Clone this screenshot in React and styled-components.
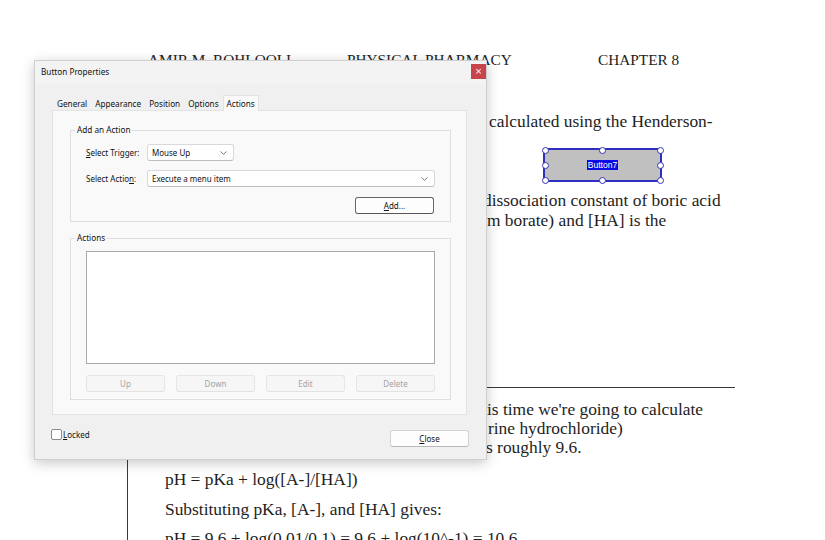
import React from "react";
import styled, { createGlobalStyle } from "styled-components";

const Global = createGlobalStyle`
  *, *::before, *::after { box-sizing: border-box; }
  html, body { margin: 0; padding: 0; background: #fff; }
  body { width: 825px; height: 540px; overflow: hidden; }
`;

const Page = styled.div`
  position: relative;
  width: 825px;
  height: 540px;
  overflow: hidden;
  background: #fff;
  font-family: "Liberation Serif", "Times New Roman", serif;
  color: #1e1e1e;
`;

const Doc = styled.div`
  padding: 50px 0 0 165px;
  font-size: 17.4px;
`;

const Header = styled.div`
  display: grid;
  grid-template-columns: 199px 251px auto;
  margin-left: -17px;
  font-size: 15.3px;
  line-height: 19px;
  height: 19px;
  white-space: nowrap;
`;

const Line = styled.div`
  display: flex;
  white-space: nowrap;
  line-height: ${(p) => p.$lh || 20}px;
  height: ${(p) => p.$lh || 20}px;
  margin-top: ${(p) => p.$mt || 0}px;
`;

const Lead = styled.span`
  display: inline-block;
  width: ${(p) => p.$w}px;
  overflow: hidden;
  flex: none;
`;

const FormField = styled.div`
  position: relative;
  width: 119px;
  height: 34px;
  margin: ${(p) => p.$mt}px 0 0 ${(p) => p.$ml}px;
  background: #c0c0c0;
  border: 2px solid #2e2ebf;
  display: flex;
  align-items: center;
  justify-content: center;
`;

const FieldCaption = styled.span`
  font-family: "Liberation Sans", Arial, sans-serif;
  font-size: 8.5px;
  line-height: 10px;
  color: #fff;
  background: #0a0ae6;
  padding: 0 1px;
`;

const Handle = styled.span`
  position: absolute;
  left: ${(p) => p.$x}%;
  top: ${(p) => p.$y}%;
  width: 7px;
  height: 7px;
  margin: -3.5px 0 0 -3.5px;
  border-radius: 50%;
  background: #fff;
  border: 1px solid #3434b8;
`;

const RuledBox = styled.div`
  margin: ${(p) => p.$mt}px 0 0 -38px;
  width: 608px;
  height: 200px;
  border-top: 1px solid #3a3a3a;
  border-left: 1px solid #3a3a3a;
  padding: 12px 0 0 37px;
`;

/* ---------- Dialog ---------- */

const Dialog = styled.div`
  position: absolute;
  left: 34px;
  top: 60px;
  width: 453px;
  height: 400px;
  background: #f0f0f0;
  border: 1px solid #cfcfcf;
  box-shadow: 0 3px 12px rgba(0, 0, 0, 0.22);
  font-family: "Noto Sans", "Open Sans", sans-serif;
  font-size: 8px;
  color: #111;
  display: flex;
  flex-direction: column;
`;

const TitleBar = styled.div`
  height: 23px;
  display: flex;
  justify-content: space-between;
  align-items: flex-start;
  background: #f3f3f3;
  padding-left: 6px;
`;

const Title = styled.span`
  line-height: 22px;
  font-size: 8.2px;
`;

const CloseX = styled.div`
  width: 15px;
  height: 15px;
  margin-top: 3px;
  background: #c8444b;
  color: #fff;
  font-family: "DejaVu Sans", sans-serif;
  font-size: 9px;
  line-height: 15px;
  text-align: center;
`;

const Body = styled.div`
  flex: 1;
  padding: 12px 19px 0 17px;
  display: flex;
  flex-direction: column;
`;

const Tabs = styled.div`
  display: flex;
  height: 14px;
  align-items: flex-end;
  padding-left: 1px;
`;

const Tab = styled.div`
  padding: 0 3px;
  height: ${(p) => (p.$active ? 16 : 14)}px;
  line-height: ${(p) => (p.$active ? 15 : 14)}px;
  font-size: 8.2px;
  background: ${(p) => (p.$active ? "#f9f9f9" : "transparent")};
  border: 1px solid ${(p) => (p.$active ? "#e2e2e2" : "transparent")};
  border-bottom: none;
  margin-bottom: ${(p) => (p.$active ? -1 : 0)}px;
  position: relative;
  white-space: nowrap;
`;

const TabPanel = styled.div`
  height: 305px;
  background: #f9f9f9;
  border: 1px solid #e3e3e3;
  padding: 19px 15px 0 17px;
`;

const Group = styled.div`
  position: relative;
  height: ${(p) => p.$h}px;
  margin-top: ${(p) => p.$mt || 0}px;
  border: 1px solid #dedede;
  padding: ${(p) => p.$pt}px 15px 0 15px;
`;

const Legend = styled.span`
  position: absolute;
  top: -7px;
  left: 4px;
  padding: 0 2px;
  background: #f9f9f9;
  line-height: 12px;
  font-size: 8.2px;
`;

const FieldRow = styled.div`
  display: flex;
  align-items: center;
  margin-top: ${(p) => p.$mt || 0}px;
`;

const FieldLabel = styled.span`
  width: 61px;
  flex: none;
`;

const Select = styled.div`
  width: ${(p) => p.$w}px;
  height: 17px;
  background: #fff;
  border: 1px solid #d9d9d9;
  border-bottom-color: #bdbdbd;
  border-radius: 3px;
  padding: 0 6px 0 4px;
  display: flex;
  align-items: center;
  justify-content: space-between;
`;

const ButtonRight = styled.div`
  display: flex;
  justify-content: flex-end;
  margin-top: 10px;
  padding-right: 1px;
`;

const PushButton = styled.div`
  width: 79px;
  height: 17px;
  margin-top: ${(p) => p.$mt || 0}px;
  border-radius: 3px;
  display: flex;
  align-items: center;
  justify-content: center;
  background: ${(p) => (p.$disabled ? "#f6f6f6" : "#fdfdfd")};
  color: ${(p) => (p.$disabled ? "#a3a3a3" : "#111")};
  border: 1px solid
    ${(p) => (p.$focus ? "#666" : p.$disabled ? "#e6e6e6" : "#d3d3d3")};
  border-bottom-color: ${(p) =>
    p.$focus ? "#555" : p.$disabled ? "#e2e2e2" : "#b9b9b9"};
  box-shadow: ${(p) => (p.$focus ? "inset 0 0 0 1px #fff" : "none")};
`;

const ListBox = styled.div`
  width: 349px;
  height: 113px;
  background: #fff;
  border: 1px solid #a9a9a9;
`;

const ButtonRow = styled.div`
  display: flex;
  justify-content: space-between;
  width: 349px;
  margin-top: 11px;
`;

const Footer = styled.div`
  display: flex;
  justify-content: space-between;
  align-items: flex-start;
  padding-top: 14px;
  margin: 0 -2px 0 -1px;
`;

const CheckLabel = styled.label`
  display: flex;
  align-items: center;
  gap: 1px;
  line-height: 11px;
`;

const CheckBox = styled.span`
  width: 11px;
  height: 11px;
  border: 1px solid #8a8a8a;
  border-radius: 2px;
  background: #fff;
`;

const Chevron = () => (
  <svg width="7" height="4" viewBox="0 0 7 4">
    <path d="M0.5 0.5 L3.5 3.3 L6.5 0.5" fill="none" stroke="#6a6a6a" strokeWidth="0.9" />
  </svg>
);

const handles = [
  [0, 0], [50, 0], [100, 0],
  [0, 50], [100, 50],
  [0, 100], [50, 100], [100, 100],
];

const tabs = ["General", "Appearance", "Position", "Options", "Actions"];

export default function App() {
  return (
    <Page>
      <Global />
      <Doc>
        <Header>
          <span>AMIR M. ROHLOOLI</span>
          <span>PHYSICAL PHARMACY</span>
          <span>CHAPTER 8</span>
        </Header>
        <Line $mt={42}>
          <Lead $w={324}>The pH of this buffer solution can be </Lead>
          calculated using the Henderson-
        </Line>
        <FormField $mt={17} $ml={378}>
          <FieldCaption>Button7</FieldCaption>
          {handles.map(([x, y]) => (
            <Handle key={`${x}-${y}`} $x={x} $y={y} />
          ))}
        </FormField>
        <Line $mt={8}>
          <Lead $w={318}>Hasselbalch equation, where pKa is the </Lead>
          dissociation constant of boric acid
        </Line>
        <Line>
          <Lead $w={322}>(5.0), [A-] is the concentration of sodiu</Lead>
          m borate) and [HA] is the
        </Line>
        <RuledBox $mt={157}>
          <Line $lh={19}>
            <Lead $w={322}>Let's try another example. Th</Lead>
            is time we're going to calculate
          </Line>
          <Line $lh={19}>
            <Lead $w={323}>the pH of 0.01 M ephedrine (as ephed</Lead>
            rine hydrochloride)
          </Line>
          <Line $lh={19}>
            <Lead $w={321}>in 0.1 M solution. The pKa of ephedrine i</Lead>
            s roughly 9.6.
          </Line>
          <Line $mt={12}>pH = pKa + log([A-]/[HA])</Line>
          <Line $mt={10}>Substituting pKa, [A-], and [HA] gives:</Line>
          <Line $mt={9}>pH = 9.6 + log(0.01/0.1) = 9.6 + log(10^-1) = 10.6</Line>
        </RuledBox>
      </Doc>

      <Dialog>
        <TitleBar>
          <Title>Button Properties</Title>
          <CloseX>×</CloseX>
        </TitleBar>
        <Body>
          <Tabs>
            {tabs.map((t) => (
              <Tab key={t} $active={t === "Actions"}>
                {t}
              </Tab>
            ))}
          </Tabs>
          <TabPanel>
            <Group $h={92} $pt={13}>
              <Legend>Add an Action</Legend>
              <FieldRow>
                <FieldLabel>
                  <u>S</u>elect Trigger:
                </FieldLabel>
                <Select $w={87}>
                  Mouse Up
                  <Chevron />
                </Select>
              </FieldRow>
              <FieldRow $mt={9}>
                <FieldLabel>
                  Select Actio<u>n</u>:
                </FieldLabel>
                <Select $w={288}>
                  Execute a menu item
                  <Chevron />
                </Select>
              </FieldRow>
              <ButtonRight>
                <PushButton $focus>
                  <span>
                    <u>A</u>dd...
                  </span>
                </PushButton>
              </ButtonRight>
            </Group>
            <Group $h={162} $pt={12} $mt={16}>
              <Legend>Actions</Legend>
              <ListBox />
              <ButtonRow>
                <PushButton $disabled>Up</PushButton>
                <PushButton $disabled>Down</PushButton>
                <PushButton $disabled>Edit</PushButton>
                <PushButton $disabled>Delete</PushButton>
              </ButtonRow>
            </Group>
          </TabPanel>
          <Footer>
            <CheckLabel>
              <CheckBox />
              <span>
                <u>L</u>ocked
              </span>
            </CheckLabel>
            <PushButton $mt={1}>
              <span>
                <u>C</u>lose
              </span>
            </PushButton>
          </Footer>
        </Body>
      </Dialog>
    </Page>
  );
}
